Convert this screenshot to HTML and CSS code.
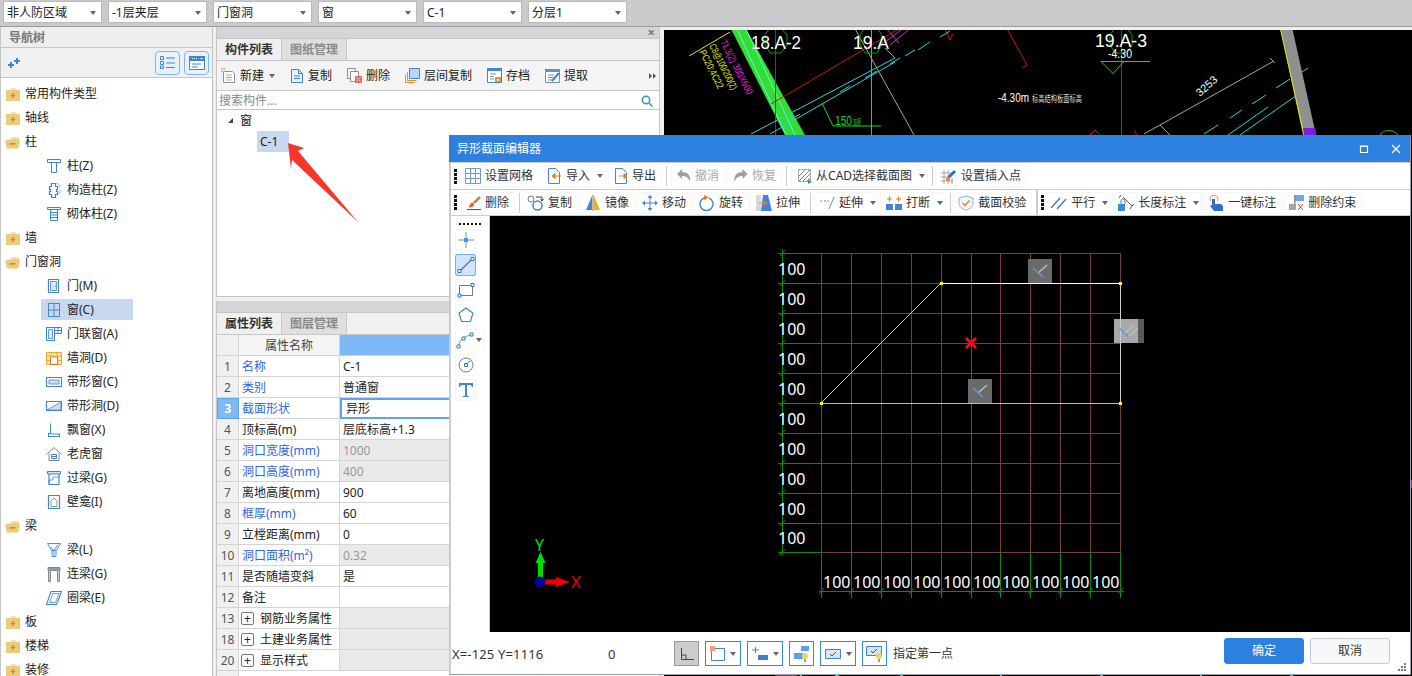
FILE: index.html
```html
<!DOCTYPE html>
<html lang="zh-CN">
<head>
<meta charset="utf-8">
<title>异形截面编辑器</title>
<link rel="stylesheet" href="styles.css">
</head>
<body>
<svg class="defs" width="0" height="0">
  <symbol id="fc" viewBox="0 0 16 16"><path d="M1 4h5V2.5h5V4h4v11H1z" fill="#eecb7c"/><path d="M6 2.500h5V4H6z" fill="#f5e0ae"/><path d="M8 7v5M5.500 9.500h5" stroke="#c9963a" stroke-width="1.600"/></symbol>
  <symbol id="fo" viewBox="0 0 17 16"><path d="M1 5h5l1-2h8v3H5z" fill="#f1d795"/><path d="M0 6h16l-2 9H2z" fill="#eecb7c"/><path d="M5 10h6" stroke="#b98a35" stroke-width="1.600"/></symbol>
</svg>
<div class="app">
  <header class="topbar">
    <div class="combo">非人防区域</div>
    <div class="combo">-1层夹层</div>
    <div class="combo">门窗洞</div>
    <div class="combo">窗</div>
    <div class="combo">C-1</div>
    <div class="combo">分层1</div>
  </header>
  <main class="workspace">
    <nav class="nav">
      <div class="nav-title">导航树</div>
      <div class="nav-tools">
        <svg class="nav-plus" width="13" height="11" viewBox="0 0 13 11"><path d="M3 5h2v2h2v2H5v2H3V9H1V7h2zM9 1h2v2h2v2h-2v2H9V5H7V3h2z" fill="#3f86d8"/></svg>
        <div class="nav-toggle"><svg width="15" height="13" viewBox="0 0 15 13"><path d="M0.500 0.500h3v3h-3zM0.500 5.500h3v3h-3zM0.500 10h3v2.500h-3z" fill="none" stroke="#3f86d8"/><path d="M6 2h9M6 7h9M6 11.500h9" stroke="#3f86d8"/></svg></div>
        <div class="nav-toggle"><svg width="16" height="14" viewBox="0 0 16 14"><rect x="0.500" y="0.500" width="15" height="13" fill="#fff" stroke="#3f86d8"/><path d="M0 0h16v5H0z" fill="#3f86d8"/><path d="M3 2h1v1H3zM5 2h1v1H5zM7 2h1v1H7zM11 2h3l-1.500 1.500z" fill="#fff"/><path d="M3 8h9M3 11h6" stroke="#3f86d8"/></svg></div>
      </div>
      <div class="tree">
        <div class="row"><svg class="fold" width="16" height="16"><use href="#fc"/></svg><span>常用构件类型</span></div>
        <div class="row"><svg class="fold" width="16" height="16"><use href="#fc"/></svg><span>轴线</span></div>
        <div class="row"><svg class="fold" width="16" height="16"><use href="#fo"/></svg><span>柱</span></div>
        <div class="row child"><svg width="16" height="16" viewBox="0 0 16 16" fill="none" stroke="#3f86d8"><path d="M1.500 1.500h13v3h-13zM5.500 4.500h5v10h-5z"/></svg><span>柱(Z)</span></div>
        <div class="row child"><svg width="16" height="16" viewBox="0 0 16 16" fill="none" stroke="#3f86d8" stroke-width="1.200"><path d="M5.500 1.500h4v3h2v3h-1v2h1v3h-2v3h-4v-3h-2v-3h1v-2h-1v-3h2z"/><path d="M10 1.500c3 0 4 2 3.500 4M12 12c2 0 2.500-2 2-4" stroke="#a9c8ec"/></svg><span>构造柱(Z)</span></div>
        <div class="row child"><svg width="16" height="16" viewBox="0 0 16 16" fill="none" stroke="#3f86d8"><path d="M1.500 1.500h13v2h-13zM4.500 3.500h7v11h-7zM4.500 6.500h7M4.500 9h7M4.500 11.500h7"/></svg><span>砌体柱(Z)</span></div>
        <div class="row"><svg class="fold" width="16" height="16"><use href="#fc"/></svg><span>墙</span></div>
        <div class="row"><svg class="fold" width="16" height="16"><use href="#fo"/></svg><span>门窗洞</span></div>
        <div class="row child"><svg width="16" height="16" viewBox="0 0 16 16" fill="none" stroke="#3f86d8"><path d="M2.500 1.500h10v13h-10z" stroke-width="1.200"/><path d="M4.500 3.500h6v9h-6z" fill="#dceafa" stroke-width=".8"/><path d="M9 8h1" stroke-width="1.200"/></svg><span>门(M)</span></div>
        <div class="row child selected"><svg width="16" height="16" viewBox="0 0 16 16" fill="none" stroke="#3f86d8"><path d="M2.500 1.500h11v13h-11zM8 1.500v13M2.500 8h11"/></svg><span>窗(C)</span></div>
        <div class="row child"><svg width="16" height="16" viewBox="0 0 16 16" fill="none" stroke="#3f86d8"><path d="M0.500 1.500h8v13h-8z" stroke-width="1.200"/><path d="M2.500 3.500h4v9h-4z" fill="#dceafa" stroke-width=".8"/><path d="M8.500 1.500h7v6h-7zM12 1.500v6M8.500 4.500h7"/></svg><span>门联窗(A)</span></div>
        <div class="row child"><svg width="16" height="16" viewBox="0 0 16 16" fill="#fde6b5" stroke="#f2a72e"><path d="M0.500 2.500h15v12h-15z"/><path d="M0.500 6h15M5 2.500V6M11 2.500V6M0.500 10.500H4M12 10.500h3.500"/><path d="M4.500 7h7v7.500h-7z" fill="#fff" stroke="#e0762a"/></svg><span>墙洞(D)</span></div>
        <div class="row child"><svg width="16" height="16" viewBox="0 0 16 16" fill="none" stroke="#3f86d8"><path d="M0.500 3.500h15v9h-15z" stroke-width="1.200"/><path d="M3 6h10v4H3z" fill="#cfe1f5" stroke-width=".8"/></svg><span>带形窗(C)</span></div>
        <div class="row child"><svg width="16" height="16" viewBox="0 0 16 16" fill="none" stroke="#3f86d8"><path d="M0.500 3.500h15v9h-15z" stroke-width="1.200"/><path d="M1 12L15 4v8z" fill="#cfe1f5" stroke-width=".8"/></svg><span>带形洞(D)</span></div>
        <div class="row child"><svg width="16" height="16" viewBox="0 0 16 16" fill="none" stroke="#3f86d8"><path d="M4.500 1.500v10h-2v3h11v-2.500h-9" stroke-width="1.100"/></svg><span>飘窗(X)</span></div>
        <div class="row child"><svg width="16" height="16" viewBox="0 0 16 16" fill="none" stroke="#7c8a99"><path d="M0.500 8.500L8 1.500l7.500 7M3 7.500v7h10v-7"/><path d="M5.500 8.500h5v4h-5zM5.500 10.500h5" stroke="#3f86d8"/></svg><span>老虎窗</span></div>
        <div class="row child"><svg width="16" height="16" viewBox="0 0 16 16" fill="none" stroke="#3f86d8"><path d="M1.500 1.500h13v2.500h-13z" fill="#cfe1f5"/><path d="M3 4v10.500h10V4" stroke-width="1.200"/><path d="M3 14l0-4h4V7h6" stroke-width=".8"/></svg><span>过梁(G)</span></div>
        <div class="row child"><svg width="16" height="16" viewBox="0 0 16 16" fill="none" stroke="#3f86d8"><path d="M2.500 1.500h11v13h-11z" stroke-width="1.200"/><path d="M5 12.500V7l3-3 3 3v5.500z" stroke="#6f8fb4" stroke-width=".9"/></svg><span>壁龛(I)</span></div>
        <div class="row"><svg class="fold" width="16" height="16"><use href="#fo"/></svg><span>梁</span></div>
        <div class="row child"><svg width="16" height="16" viewBox="0 0 16 16" fill="none" stroke="#3f86d8"><path d="M1.500 1.500h13l-4 7h-5zM6 8.500v6h4v-6M8 8.500v6M4 4.500l4 4 4-6" stroke-width=".9"/></svg><span>梁(L)</span></div>
        <div class="row child"><svg width="16" height="16" viewBox="0 0 16 16" fill="none" stroke="#7c8a99"><path d="M2 1.500h12v3H2z" fill="#8d99a6"/><path d="M2.500 4.500v11h2v-11M11.500 4.500v11h2v-11" fill="#c5ccd3"/></svg><span>连梁(G)</span></div>
        <div class="row child"><svg width="16" height="16" viewBox="0 0 16 16" fill="none" stroke="#3f86d8"><path d="M5 1.500h10.500l-5 13H0.500z" stroke-width="1.100"/><path d="M7 3.500h6l-3.500 9H3.500z" stroke-width=".8"/></svg><span>圈梁(E)</span></div>
        <div class="row"><svg class="fold" width="16" height="16"><use href="#fc"/></svg><span>板</span></div>
        <div class="row"><svg class="fold" width="16" height="16"><use href="#fc"/></svg><span>楼梯</span></div>
        <div class="row"><svg class="fold" width="16" height="16"><use href="#fc"/></svg><span>装修</span></div>
      </div>
    </nav>

    <section class="mid">
      <div class="panel-top">
        <div class="strip"><span class="strip-x">×</span></div>
        <div class="tabs"><div class="tab active">构件列表</div><div class="tab">图纸管理</div></div>
        <div class="mtools">
          <div class="mtool"><svg width="15" height="15" viewBox="0 0 15 15"><path d="M2.500 3.500h9l2 2v9h-11z" fill="#fff" stroke="#8a8f95"/><path d="M5 7h6M5 9.500h6M5 12h6" stroke="#a6abb0"/><path d="M0 0h4v4H0z" fill="#f2a04a"/><path d="M2 0v4M0 2h4" stroke="#fff" stroke-width=".8"/></svg><span>新建</span><i class="caret"></i></div>
          <div class="mtool"><svg width="14" height="15" viewBox="0 0 14 15"><path d="M1.500 1.500h7l4 4v9h-11z" fill="#e9f2fc" stroke="#3f86d8"/><path d="M8.500 1.500v4h4M4 8h6M4 10.500h6" fill="none" stroke="#3f86d8"/></svg><span>复制</span></div>
          <div class="mtool"><svg width="15" height="15" viewBox="0 0 15 15"><path d="M0.500 0.500h8v10h-8z" fill="#f6f6f6" stroke="#8a8f95"/><path d="M3.500 3.500h8v10h-8z" fill="#fff" stroke="#8a8f95"/><path d="M8 8h7v7H8z" fill="#e06a6a"/><path d="M9.500 9.500l4 4M13.500 9.500l-4 4" stroke="#fff"/></svg><span>删除</span></div>
          <div class="mtool"><svg width="15" height="15" viewBox="0 0 15 15"><path d="M4.500 0.500h10v10h-10z" fill="#bcd6f5" stroke="#3f86d8"/><path d="M2.500 4v8.500h9M0.500 6.500v8h9" fill="none" stroke="#ee8a2f"/></svg><span>层间复制</span></div>
          <div class="mtool"><svg width="15" height="15" viewBox="0 0 15 15"><path d="M0.500 0.500h14v14h-14z" fill="#fff" stroke="#3f86d8"/><path d="M0 0h15v3H0z" fill="#3f86d8"/><path d="M3 6h6M3 8.500h4M3 11h4" stroke="#8a8f95"/><path d="M8 9h6v5H8z" fill="#ee8a2f"/><path d="M10 11h2v2h-2z" fill="#fff"/></svg><span>存档</span></div>
          <div class="mtool"><svg width="15" height="15" viewBox="0 0 15 15"><path d="M0.500 1.500h14v13h-14z" fill="#fff" stroke="#6f8fb4"/><path d="M0 1h15v3H0z" fill="#6f8fb4"/><path d="M3 7h6M3 9.500h5M3 12h4" stroke="#8a8f95"/><path d="M7 13l7-8" stroke="#3f86d8" stroke-width="2"/></svg><span>提取</span></div>
          <div class="more"><i></i><i></i></div>
        </div>
        <div class="search"><span>搜索构件...</span><svg width="12" height="12" viewBox="0 0 12 12" fill="none" stroke="#3a8fcf" stroke-width="1.500"><circle cx="5" cy="5" r="3.700"/><path d="M8 8l3.500 3.500"/></svg></div>
        <div class="comp-tree">
          <div class="comp-root"><i class="tri"></i><span>窗</span></div>
          <div class="comp-item">C-1</div>
        </div>
      </div>
      <div class="panel-bottom">
        <div class="strip"></div>
        <div class="tabs"><div class="tab active">属性列表</div><div class="tab">图层管理</div></div>
        <div class="props">
          <div class="n"></div><div class="c head">属性名称</div><div class="c head-v"></div>
          <div class="n">1</div><div class="c b">名称</div><div class="c">C-1</div>
          <div class="n">2</div><div class="c b">类别</div><div class="c">普通窗</div>
          <div class="n on">3</div><div class="c b">截面形状</div><div class="c edit">异形</div>
          <div class="n">4</div><div class="c">顶标高(m)</div><div class="c">层底标高+1.3</div>
          <div class="n">5</div><div class="c b">洞口宽度(mm)</div><div class="c off">1000</div>
          <div class="n">6</div><div class="c b">洞口高度(mm)</div><div class="c off">400</div>
          <div class="n">7</div><div class="c">离地高度(mm)</div><div class="c">900</div>
          <div class="n">8</div><div class="c b">框厚(mm)</div><div class="c">60</div>
          <div class="n">9</div><div class="c">立樘距离(mm)</div><div class="c">0</div>
          <div class="n">10</div><div class="c b">洞口面积(m²)</div><div class="c off">0.32</div>
          <div class="n">11</div><div class="c">是否随墙变斜</div><div class="c">是</div>
          <div class="n">12</div><div class="c">备注</div><div class="c"></div>
          <div class="n">13</div><div class="c grp"><i class="plus">+</i>钢筋业务属性</div><div class="c off"></div>
          <div class="n">18</div><div class="c grp"><i class="plus">+</i>土建业务属性</div><div class="c off"></div>
          <div class="n">20</div><div class="c grp"><i class="plus">+</i>显示样式</div><div class="c off"></div>
          <div class="n last"></div>
        </div>
      </div>
    </section>

    <div class="cad">
      <svg class="cad-svg" width="748" height="646" viewBox="664 30 748 646" font-family="'Liberation Sans',sans-serif">
        <path d="M730 27h15l61 110h-20z" fill="#33dd33"/>
        <path d="M736 27l50 108M745 27l50 108" stroke="#5ff5e0" fill="none"/>
        <g fill="none" stroke="#cc1111">
          <path d="M775.500 27v110M1121.500 27v110"/>
          <path d="M771 104L902 27M1006 27l21 38-5 3M944 27l6 13 3-6M1090 135l5-5 5 5M1134 130l3 5"/>
        </g>
        <path d="M871.500 27v110" stroke="#c070c0"/>
        <path d="M885 27l14 16M905 27l-24 18M912 27l-22 18" stroke="#cc33cc" fill="none"/>
        <g fill="none" stroke="#1ed8e0">
          <path d="M751 134L895 58l-10-10"/>
          <path d="M770 134L895 62M790 120l10-6M840 92l10-6M865 78l12-7M890 64l10-6M905 56l10-6M918 50l12-8M940 37l10-6M968 30l3-2"/>
          <path d="M1204 134l14-9M1230 118l12-8M1252 104l14-9M1276 88l14-9M1296 76l12-8M1228 135l40-28M1240 135l60-42"/>
        </g>
        <path d="M854 27l60 108M1144 134l130-73M1160 125l10 10M1270 58l5 5" stroke="#a8b060" fill="none"/>
        <path d="M1280 27h12l24 108h-13z" fill="#909090"/>
        <path d="M1280 27l24 108" stroke="#e6e600" fill="none"/>
        <path d="M1303 128h12l1 7h-12z" fill="#7a1fe0"/>
        <g stroke="#0a9a0a" fill="none">
          <path d="M765 35l5-7h11l6 7v10l-6 8h-11l-5-8zM860 35l5-7h12l5 7v10l-5 8h-12l-5-8zM1110 35l5-7h12l5 7v10l-5 8h-12l-5-8z"/>
          <path d="M1380 135c3-6 14-6 18 0" stroke="#18c018"/>
        </g>
        <path d="M1101 61.500h49M1101 61.500l12 12 11-12M822 103l11 23h48" stroke="#19d919" fill="none"/>
        <path d="M689 56l41-24" stroke="#e6e600" fill="none"/>
        <text x="751" y="49" fill="#fff" font-size="18" textLength="50" lengthAdjust="spacingAndGlyphs">18.A-2</text>
        <text x="853" y="49" fill="#fff" font-size="18" textLength="36" lengthAdjust="spacingAndGlyphs">19.A</text>
        <text x="1095" y="47" fill="#fff" font-size="18" textLength="52" lengthAdjust="spacingAndGlyphs">19.A-3</text>
        <text x="1108" y="58" fill="#fff" font-size="12" textLength="24" lengthAdjust="spacingAndGlyphs">-4.30</text>
        <text x="998" y="102" fill="#fff" font-size="13" textLength="31" lengthAdjust="spacingAndGlyphs">-4.30m</text>
        <text x="1032" y="102" fill="#ddd" font-size="9" textLength="50" lengthAdjust="spacingAndGlyphs" font-family="'Noto Sans CJK SC',sans-serif">标高结构板面标高</text>
        <text x="835" y="125" fill="#19d919" font-size="13" textLength="17" lengthAdjust="spacingAndGlyphs">150</text>
        <text x="853" y="125" fill="#19d919" font-size="8" textLength="8" lengthAdjust="spacingAndGlyphs" font-family="'Noto Sans CJK SC',sans-serif">加密</text>
        <text transform="translate(1200 97) rotate(-42)" fill="#fff" font-size="11">3253</text>
        <text transform="translate(720 42) rotate(63)" fill="#e020e0" font-size="10" textLength="60" lengthAdjust="spacingAndGlyphs">TL3(2) 300X600</text>
        <text transform="translate(709 46) rotate(63)" fill="#e6e600" font-size="10" textLength="50" lengthAdjust="spacingAndGlyphs">C8@100/200(2)</text>
        <text transform="translate(699 52) rotate(63)" fill="#e6e600" font-size="10" textLength="42" lengthAdjust="spacingAndGlyphs">PC20;4C22</text>
        <path d="M800 675h2v2h-2zM835 675h4v2h-4zM900 675h3v2h-3zM1000 675h2v2h-2zM1100 675h3v2h-3zM1200 675h2v2h-2zM1290 675h3v2h-3z" fill="#1ed8e0"/>
        <path d="M775 674h22v3h-22zM1411 480h1v8h-1z" fill="#7a1fe0"/>
      </svg>
    </div>
  </main>

  <svg class="callout" width="80" height="90" viewBox="285 140 80 90"><path d="M288 143l16 5-6 3 60 71-66-62-1 9z" fill="#f5382a"/></svg>

  <section class="dialog">
    <div class="dlg-title">
      <span>异形截面编辑器</span>
      <svg class="win" width="10" height="10" viewBox="0 0 10 10" fill="none" stroke="#fff"><path d="M1.500 2.500h7v6h-7zM1 2h8" stroke-width="1.200"/></svg>
      <svg class="win win-x" width="10" height="10" viewBox="0 0 10 10" stroke="#fff" stroke-width="1.300"><path d="M1 1l8 8M9 1l-8 8"/></svg>
    </div>
    <div class="dlg-tb first">
      <i class="grip"></i>
      <div class="tool"><svg width="16" height="16" viewBox="0 0 16 16" fill="none" stroke="#6f9ccf"><path d="M0.500 0.500h15v15h-15zM5.500 0.500v15M10.500 0.500v15M0.500 5.500h15M0.500 10.500h15"/></svg><span>设置网格</span></div>
      <div class="tool drop"><svg width="15" height="16" viewBox="0 0 15 16"><path d="M1.500 0.500h7l4 4v11h-11z" fill="#fff" stroke="#3f86d8"/><path d="M14 8H8M8 5.500L5 8l3 2.500z" fill="#ee7a1f" stroke="#ee7a1f"/></svg><span>导入</span><i class="caret"></i></div>
      <div class="tool"><svg width="14" height="16" viewBox="0 0 14 16"><path d="M1.500 0.500h7l4 4v11h-11z" fill="#fff" stroke="#3f86d8"/><path d="M5 8h5M10 5.500L13 8l-3 2.500z" fill="#ee7a1f" stroke="#ee7a1f"/></svg><span>导出</span></div>
      <i class="sep"></i>
      <div class="tool dim"><svg width="14" height="14" viewBox="0 0 14 14"><path d="M0 5l5-5v3c6 0 9 4 8 10-1-4-4-6-8-6v3z" fill="#9aa0a6"/></svg><span>撤消</span></div>
      <div class="tool dim"><svg width="15" height="14" viewBox="0 0 14 14"><path d="M14 5L9 0v3C3 3 0 7 1 13c1-4 4-6 8-6v3z" fill="#9aa0a6"/></svg><span>恢复</span></div>
      <i class="sep"></i>
      <div class="tool drop"><svg width="15" height="16" viewBox="0 0 15 16" fill="none" stroke="#7c8288"><path d="M1.500 1.500h12v12h-12z" stroke-dasharray="2 1"/><path d="M2 8l6-6M2 13l11-11M6 13l7-7M10 13l3-3"/><path d="M11 11l4 3-4 2z" fill="#3f86d8" stroke="none"/></svg><span>从CAD选择截面图</span><i class="caret"></i></div>
      <i class="sep tight"></i>
      <div class="tool"><svg width="16" height="16" viewBox="0 0 16 16" fill="none" stroke="#8a8f95" stroke-width=".8"><path d="M0 5h10M0 9h10M0 13h12M3 2v14M7 2v14M11 10v6"/><circle cx="7" cy="11" r="2" fill="#ee7a1f" stroke="none"/><path d="M8 9l6-6" stroke="#2f6fc8" stroke-width="3"/></svg><span>设置插入点</span></div>
    </div>
    <div class="dlg-tb second">
      <i class="grip g2"></i>
      <div class="tool"><svg width="14" height="16" viewBox="0 0 16 16" overflow="visible"><path d="M8 8l7-7" stroke="#b48a4a" stroke-width="3"/><path d="M3 10c2-3 4-3 5-1s-2 4-6 4z" fill="#d9692a"/><path d="M0 15.500h16" stroke="#333"/></svg><span>删除</span></div>
      <i class="sep"></i>
      <div class="tool"><svg width="17" height="16" viewBox="0 0 17 16" fill="none"><circle cx="4" cy="4" r="3" stroke="#777"/><circle cx="10.500" cy="10.500" r="4.500" stroke="#3f86d8" stroke-width="1.500"/><path d="M9 2h6v3M13.500 4l1.500 2 1.500-2" stroke="#444"/></svg><span>复制</span></div>
      <div class="tool"><svg width="16" height="16" viewBox="0 0 16 16"><path d="M7 1L1 15h6z" fill="#3f86d8"/><path d="M9 1l6 14H9z" fill="#f2b01e"/><path d="M8 0v16" stroke="#777"/></svg><span>镜像</span></div>
      <div class="tool"><svg width="16" height="16" viewBox="0 0 16 16" fill="#3f86d8" stroke="#3f86d8"><path d="M8 3v10M3 8h10" fill="none"/><path d="M8 0l2.500 3h-5zM8 16l2.500-3h-5zM0 8l3-2.500v5zM16 8l-3-2.500v5z" stroke="none"/></svg><span>移动</span></div>
      <div class="tool"><svg width="16" height="16" viewBox="0 0 16 16" fill="none"><path d="M5 3a6.500 6.500 0 1 0 5 0" stroke="#3f86d8" stroke-width="1.400"/><path d="M5 0l5 2.500L5 5z" fill="#ee7a1f"/></svg><span>旋转</span></div>
      <div class="tool"><svg width="16" height="16" viewBox="0 0 16 16"><path d="M0 0h5v16H0z" fill="#d5d8dc"/><path d="M7 0h5l4 16H5z" fill="#3f86d8"/><path d="M3 8h7M8 6l3 2-3 2z" stroke="#ee7a1f" fill="#ee7a1f"/></svg><span>拉伸</span></div>
      <i class="sep wide"></i>
      <div class="tool drop"><svg width="15" height="16" viewBox="0 0 15 16" fill="none" stroke="#8a8f95"><path d="M0 6h2M4 6h2M7 6h2" stroke="#5f8fc8"/><path d="M14 2L9 14" stroke="#5f8fc8"/></svg><span>延伸</span><i class="caret"></i></div>
      <div class="tool drop"><svg width="16" height="16" viewBox="0 0 16 16"><path d="M0 9h7v6H0zM9 9h7v6H9z" fill="#3f86d8"/><path d="M1 4h5M3.500 1.500v5M10 4h5M12.500 1.500v5" stroke="#ee7a1f" stroke-width="1.200"/></svg><span>打断</span><i class="caret"></i></div>
      <i class="sep"></i>
      <div class="tool"><svg width="16" height="16" viewBox="0 0 16 16" fill="none"><path d="M8 1l7 2v5c0 4-3 6-7 7-4-1-7-3-7-7V3z" fill="#eef5fc" stroke="#8ab4e4"/><path d="M4.500 8l2.500 2.500 4.500-5" stroke="#ee7a1f" stroke-width="1.300"/></svg><span>截面校验</span></div>
      <i class="bar"></i>
      <i class="grip g3"></i>
      <div class="tool drop"><svg width="16" height="16" viewBox="0 0 16 16" stroke="#3f6fb0" stroke-width="1.200"><path d="M0 13L9 3M6 14L15 4"/></svg><span>平行</span><i class="caret"></i></div>
      <div class="tool drop"><svg width="16" height="16" viewBox="0 0 16 16" fill="none"><path d="M4 9V6a2 2 0 0 1 4 0v3" stroke="#3f86d8" transform="translate(-1 0)"/><path d="M0 9h7v7H0z" fill="#3f86d8"/><path d="M3 0l-2 3M5 2l9 9M14 11l2-2M12 14l2-3" stroke="#555"/></svg><span>长度标注</span><i class="caret"></i></div>
      <div class="tool"><svg width="15" height="16" viewBox="0 0 15 16" fill="none"><path d="M1.500 6a4 4 0 1 1 7 0" stroke="#ee8a5f"/><path d="M3 4h3v5h6l2 2v5H5L1 11l2-1z" fill="#2f6fc8"/></svg><span>一键标注</span></div>
      <div class="tool"><svg width="15" height="16" viewBox="0 0 15 16"><path d="M6 0h9v6H6z" fill="#6fa8ea"/><path d="M5 0h1.500v10H5z" fill="#8a8f95"/><path d="M0 9h7v6H0z" fill="#a0a5aa"/><path d="M9 9l5 6M14 9l-5 6" stroke="#e0401f"/></svg><span>删除约束</span></div>
    </div>
    <div class="dlg-body">
      <aside class="side">
        <div class="dots"></div>
        <div class="sbtn"><svg width="16" height="16" viewBox="0 0 16 16"><path d="M8 0v5M8 11v5M0 8h5M11 8h5" stroke="#8a8f95"/><circle cx="8" cy="8" r="2.500" fill="#4a90e2"/></svg></div>
        <div class="sbtn sel"><svg width="18" height="18" viewBox="0 0 18 18" fill="none"><path d="M3 15L15 3" stroke="#6b7075" stroke-width="1.200"/><path d="M1 13.500h3v3H1zM14 1.500h3v3h-3z" fill="#fff" stroke="#2f78d0"/></svg></div>
        <div class="sbtn"><svg width="18" height="16" viewBox="0 0 18 16" fill="none"><path d="M2.500 3.500h13v10h-13z" stroke="#777"/><path d="M1 12h3v3H1zM14 1.500h3v3h-3z" fill="#fff" stroke="#2f78d0"/></svg></div>
        <div class="sbtn"><svg width="16" height="16" viewBox="0 0 16 16" fill="none"><path d="M8 1l7 5.200-2.600 8.300H3.600L1 6.200z" stroke="#3f86d8" stroke-width="1.200"/></svg></div>
        <div class="sbtn arc"><svg width="18" height="18" viewBox="0 0 18 18" fill="none"><path d="M3 15c0-5 3-9 12-11" stroke="#8a8f95"/><path d="M1 14h3v3H1zM6 6h3v3H6zM14 2h3v3h-3z" fill="#fff" stroke="#2f78d0"/></svg><i class="caret"></i></div>
        <div class="sbtn"><svg width="16" height="16" viewBox="0 0 16 16" fill="none"><circle cx="8" cy="8" r="7" stroke="#777"/><path d="M8 8l4-4" stroke="#3f86d8"/><path d="M6.500 6.500h3v3h-3z" fill="#fff" stroke="#2f78d0"/></svg></div>
        <div class="sbtn"><svg width="16" height="16" viewBox="0 0 16 16" fill="#3f86d8"><path d="M1 1h14v4h-1c0-1-1-2-2-2H9v10c0 1 1 1 2 1v1H5v-1c1 0 2 0 2-1V3H4C3 3 2 4 2 5H1z"/></svg></div>
      </aside>
      <div class="canvas">
        <svg class="canvas-svg" width="920" height="416" viewBox="490 216 920 416" font-family="'Noto Sans',sans-serif" font-size="16" fill="#fff">
          <g fill="none" stroke="#7a3d45">
            <path d="M851.500 253v299M881.500 253v299M911.500 253v299M941.500 253v299M971.500 253v299M1000.500 253v299M1030.500 253v299M1060.500 253v299M1090.500 253v299M1120.500 253v299M821.500 253v299"/>
            <path d="M821 253.500h300M821 283.500h300M821 313.500h300M821 343.500h300M821 373.500h300M821 403.500h300M821 433.500h300M821 463.500h300M821 493.500h300M821 523.500h300M821 552.500h300"/>
          </g>
          <g fill="none" stroke="#0a8a0a">
            <path d="M782.500 249v306M778 253.500h43M778 283.500h43M778 313.500h43M778 343.500h43M778 373.500h43M778 403.500h43M778 433.500h43M778 463.500h43M778 493.500h43M778 523.500h43M778 552.500h43"/>
            <path d="M819 591.500h305M821.500 552v46M851.500 552v46M881.500 552v46M911.500 552v46M941.500 552v46M971.500 552v46M1000.500 552v46M1030.500 552v46M1060.500 552v46M1090.500 552v46M1120.500 552v46"/>
            <path d="M780 256l5-6M780 286l5-6M780 316l5-6M780 346l5-6M780 376l5-6M780 406l5-6M780 436l5-6M780 466l5-6M780 496l5-6M780 526l5-6M780 555l5-6"/>
            <path d="M819 594l5-6M849 594l5-6M879 594l5-6M909 594l5-6M939 594l5-6M969 594l5-6M998 594l5-6M1028 594l5-6M1058 594l5-6M1088 594l5-6M1118 594l5-6"/>
          </g>
          <g>
            <text x="778" y="275">100</text><text x="778" y="305">100</text><text x="778" y="335">100</text><text x="778" y="365">100</text><text x="778" y="395">100</text><text x="778" y="425">100</text><text x="778" y="455">100</text><text x="778" y="485">100</text><text x="778" y="515">100</text><text x="778" y="544">100</text>
            <text x="823" y="588">100</text><text x="853" y="588">100</text><text x="883" y="588">100</text><text x="913" y="588">100</text><text x="943" y="588">100</text><text x="973" y="588">100</text><text x="1002" y="588">100</text><text x="1032" y="588">100</text><text x="1062" y="588">100</text><text x="1092" y="588">100</text>
          </g>
          <path d="M1028 259h24v24h-24zM968 379h24v24h-24z" fill="#6a6a6a"/>
          <path d="M1114 319h24v24h-24z" fill="#a8a8a8"/>
          <path d="M1138 319h6v24h-6z" fill="#5a5a5a"/>
          <path d="M941 283.500h179" stroke="#fff" fill="none"/>
          <path d="M821 403.500h299" stroke="#bbb" fill="none"/>
          <path d="M1120.500 283v120" stroke="#ccc" fill="none"/>
          <path d="M821 403L941 283" stroke="#c4c4c4" fill="none"/>
          <path d="M1038 273l9-8M978 393l9-8M1124 334l10-9M1128 337l10-9" stroke="#c0c0c0" stroke-width="1.300" fill="none"/>
          <path d="M1033 268l10 9M973 388l10 9M1119 328l10 9" stroke="#5b9be0" stroke-width="1.500" fill="none"/>
          <path d="M820 402h3v3h-3zM940 282h3v3h-3zM1119 282h3v3h-3zM1119 402h3v3h-3z" fill="#ffff00"/>
          <path d="M966 338l10 10M976 338l-10 10" stroke="#f01010" stroke-width="3"/>
          <path d="M538 582v-20h5v20z" fill="#00e000"/>
          <path d="M540.500 552l5 11h-10z" fill="#00e000"/>
          <path d="M540 579.500h16v5h-16z" fill="#ee0000"/>
          <path d="M570 582l-14-5v10z" fill="#ee0000"/>
          <circle cx="540" cy="582" r="5.500" fill="#00009a"/>
          <text x="535" y="551" fill="#00e000" font-size="16">Y</text>
          <text x="571" y="588" fill="#ee0000" font-size="17">X</text>
        </svg>
      </div>
    </div>
    <footer class="dlg-foot">
      <span class="coord">X=-125 Y=1116</span>
      <span class="zero">0</span>
      <div class="fbtn on"><svg width="14" height="12" viewBox="0 0 14 12" fill="none" stroke="#444"><path d="M1.500 0v11.500H14M1.500 7H6v4.500"/></svg></div>
      <div class="fbtn wide"><svg width="15" height="15" viewBox="0 0 15 15" fill="none"><path d="M1.500 2.500h13v12h-13z" stroke="#3f86d8"/><path d="M0 0h5v5H0z" fill="#f0a070"/></svg><i class="caret"></i></div>
      <div class="fbtn wide"><svg width="16" height="13" viewBox="0 0 16 13"><path d="M3.500 0v6M0 3h7" stroke="#3f86d8"/><path d="M6 8h10v5H6z" fill="#3f7fc8"/></svg><i class="caret"></i></div>
      <div class="fbtn"><svg width="16" height="16" viewBox="0 0 16 16"><path d="M7 0h8v5H7z" fill="#5f9fe8"/><path d="M0 7h9v6H0z" fill="#5f9fe8"/><circle cx="11" cy="10" r="3" fill="#f5d05a"/><path d="M10 13h2v3h-2z" fill="#999"/></svg></div>
      <div class="fbtn wide"><svg width="16" height="10" viewBox="0 0 16 10" fill="none"><path d="M0.500 0.500h15v9h-15z" fill="#d5e4f6" stroke="#3f86d8"/><path d="M5 5l2 2 4-4" stroke="#555"/></svg><i class="caret"></i></div>
      <div class="fbtn"><svg width="17" height="16" viewBox="0 0 17 16" fill="none"><path d="M0.500 0.500h15v9h-15z" fill="#d5e4f6" stroke="#3f86d8"/><path d="M5 5l2 2 4-4" stroke="#555"/><circle cx="13" cy="10" r="3" fill="#f5d05a"/><path d="M12 13h2v3h-2z" fill="#999"/></svg></div>
      <span class="hint">指定第一点</span>
      <button class="btn primary">确定</button>
      <button class="btn">取消</button>
      <svg class="resize" width="8" height="8" viewBox="0 0 8 8" fill="#777"><path d="M6 0h2v2H6zM3 3h2v2H3zM6 3h2v2H6zM0 6h2v2H0zM3 6h2v2H3zM6 6h2v2H6z"/></svg>
    </footer>
  </section>
</div>
</body>
</html>
```
FILE: styles.css
```css
* { box-sizing: border-box; }
html, body { margin: 0; height: 100%; }
body {
  font: 12px/16px "Noto Sans", "Noto Sans CJK SC", sans-serif;
  color: #222;
  background: #efefef;
  overflow: hidden;
}
i { font-style: normal; display: block; }
svg { display: block; flex: none; }
.defs { position: absolute; }
.app { position: relative; width: 1412px; height: 676px; overflow: hidden; }

.caret {
  width: 0; height: 0; flex: none;
  border-top: 4px solid #666;
  border-left: 3px solid transparent;
  border-right: 3px solid transparent;
}

/* top bar */
.topbar {
  height: 27px;
  display: flex;
  gap: 6px;
  padding: 1px 0 0 3px;
  background: #c9cacc;
  border-bottom: 1px solid #9b9b9b;
}
.combo {
  position: relative;
  width: 99px; height: 22px;
  padding-left: 3px;
  line-height: 22px;
  background: #fff;
  border: 1px solid #bbb;
}
.combo::after {
  content: ""; position: absolute; right: 5px; top: 9px;
  border-top: 4px solid #666;
  border-left: 3px solid transparent;
  border-right: 3px solid transparent;
}

/* workspace */
.workspace { display: flex; height: 649px; }

/* navigation tree */
.nav {
  width: 213px; flex: none;
  display: flex; flex-direction: column;
  background: #fff;
  border-left: 1px solid #c4c4c4;
  border-right: 1px solid #c4c4c4;
  overflow: hidden;
}
.nav-title {
  height: 21px; flex: none;
  padding-left: 8px;
  line-height: 21px;
  color: #777; font-weight: 700;
  background: #eee;
  border-bottom: 1px solid #c6c6c6;
}
.nav-tools {
  height: 30px; flex: none;
  display: flex; align-items: center; gap: 4px;
  padding: 0 3px 0 6px;
  background: #f0f0f0;
  border-bottom: 1px solid #c6c6c6;
}
.nav-plus { margin-right: auto; }
.nav-toggle {
  width: 25px; height: 24px;
  display: flex; align-items: center; justify-content: center;
  background: #e7f2fd;
  border: 1px solid #7db6f0;
  border-radius: 4px;
}
.tree { padding-top: 5px; }
.row {
  height: 21px; margin-bottom: 3px;
  display: flex; align-items: center; gap: 4px;
  padding-left: 4px;
  white-space: nowrap;
}
.row.child { width: 92px; margin-left: 40px; padding-left: 5px; gap: 5px; }
.row.selected { background: #c7d8f0; }

/* middle column */
.mid {
  width: 444px; flex: none;
  margin-left: 3px;
  display: flex; flex-direction: column;
}
.panel-top {
  height: 270px; flex: none;
  display: flex; flex-direction: column;
  border: solid #c6c6c6; border-width: 0 1px 1px;
  background: #fff;
}
.panel-bottom {
  flex: 1; margin-top: 4px; min-height: 0;
  display: flex; flex-direction: column;
  border: solid #c6c6c6; border-width: 0 1px;
  background: #fff;
}
.strip {
  height: 12px; flex: none;
  display: flex; justify-content: flex-end; align-items: center;
  padding-right: 4px;
  background: #d3d5d9;
  border-bottom: 1px solid #c6c6c6;
}
.strip-x { font-size: 13px; line-height: 11px; color: #777; font-weight: 700; }
.tabs {
  height: 22px; flex: none;
  display: flex;
  background: #f0f0f0;
  border-bottom: 1px solid #c6c6c6;
}
.tab {
  width: 65px;
  text-align: center;
  line-height: 22px;
  color: #8a8a8a; font-weight: 700;
  background: #dfdfdf;
  border-right: 1px solid #c6c6c6;
}
.tab.active { width: 65px; color: #333; background: #f0f0f0; border-right-color: #c6c6c6; }
.mtools {
  height: 30px; flex: none;
  display: flex; align-items: center; gap: 15px;
  padding-left: 4px;
  background: #f4f4f4;
  border-bottom: 1px solid #c6c6c6;
}
.mtool { display: flex; align-items: center; gap: 4px; }
.mtool .caret { margin-left: 1px; }
.more { margin-left: auto; margin-right: 2px; display: flex; }
.more i {
  border-left: 3px solid #555;
  border-top: 3px solid transparent;
  border-bottom: 3px solid transparent;
  margin-right: 1px;
}
.search {
  height: 19px; flex: none;
  display: flex; align-items: center; justify-content: space-between;
  padding: 1px 6px 0 2px;
  color: #888;
  background: #fff;
  border-bottom: 1px solid #c6c6c6;
}
.comp-tree { flex: 1; background: #fff; position: relative; }
.comp-root {
  display: flex; align-items: center; gap: 7px;
  height: 21px; padding-left: 11px;
  color: #111;
}
.tri {
  width: 0; height: 0;
  border-bottom: 5px solid #444;
  border-left: 5px solid transparent;
}
.comp-item {
  width: 32px; height: 21px;
  margin: 0 0 0 40px;
  padding-left: 3px;
  line-height: 22px;
  background: #c7d8f0;
}

/* property grid */
.props {
  flex: 1;
  display: grid;
  grid-template-columns: 22px 101px 1fr;
  grid-auto-rows: 21px;
  overflow: hidden;
}
.n {
  text-align: center; line-height: 21px;
  color: #555;
  background: #f0f0f0;
  border-right: 1px solid #d4d4d4;
  border-bottom: 1px solid #d4d4d4;
}
.n.on { background: #7eb8f6; color: #fff; font-weight: 700; border: 1px solid #5fa3ee; line-height: 20px; }
.n.last { border-bottom: 0; }
.c {
  padding-left: 3px;
  line-height: 21px;
  white-space: nowrap;
  border-right: 1px solid #d4d4d4;
  border-bottom: 1px solid #d4d4d4;
}
.head { background: #f4f4f4; text-align: center; padding-left: 0; color: #444; }
.head-v { background: #7eb8f6; border-right: 0; }
.c.b { color: #2f66e6; }
.c.off { background: #e9e9e9; color: #999; }
.c.edit { border: 2px solid #5fa3ee; border-width: 2px 0 2px 2px; padding-left: 4px; line-height: 18px; }
.grp { display: flex; align-items: center; gap: 6px; padding: 1px 0 0 2px; }
.plus {
  width: 13px; height: 13px;
  display: flex; align-items: center; justify-content: center;
  font-size: 12px; line-height: 11px;
  border: 1px solid #777; border-radius: 2px;
}

/* CAD drawing */
.cad { flex: 1; margin: 3px 0 0 4px; background: #000; overflow: hidden; }
.callout { position: absolute; left: 285px; top: 140px; }

/* section editor window */
.dialog {
  position: absolute; left: 449px; top: 135px;
  width: 962px; height: 540px;
  display: flex; flex-direction: column;
  background: #c9cdd2;
  border-right: 1px solid #9aa0a8;
  border-bottom: 1px solid #9aa0a8;
}
.dlg-title {
  height: 27px; flex: none;
  display: flex; align-items: center;
  padding-left: 8px;
  color: #fff;
  background: #2e80e0;
}
.win { margin-left: auto; margin-right: 22px; }
.win.win-x { margin-left: 0; margin-right: 9px; }
.dlg-tb {
  flex: none;
  display: flex; align-items: center;
  margin-left: 2px;
  padding-left: 3px;
  background: #fff;
  color: #333;
}
.dlg-tb.first { height: 26px; gap: 2px; margin-top: 1px; }
.dlg-tb.second { height: 25px; gap: 1px; margin-top: 1px; }
.grip {
  width: 3px; height: 15px; flex: none;
  background: repeating-linear-gradient(#111 0 3px, transparent 3px 4px);
}
.grip.g2 { margin-right: 3px; }
.grip.g3 { margin: 0 0 0 2px; }
.tool {
  height: 22px; flex: none;
  display: flex; align-items: center; gap: 4px;
  padding: 0 6px;
  border-radius: 3px;
  box-shadow: inset 0 0 0 1px #f7f7f7;
}
.tool.drop { padding-right: 3px; }
.tool .caret { margin-left: 3px; }
.tool.dim { color: #a4a8ad; }
.sep { width: 1px; height: 20px; flex: none; margin: 0 2px; background: #c9cdd2; }
.sep.tight { margin-right: 0; }
.second .sep { margin: 0 0 0 3px; }
.second .sep.wide { margin: 0 2px 0 3px; }
.bar { width: 2px; height: 25px; flex: none; margin-left: 3px; background: #c9cdd2; }

.dlg-body { height: 416px; flex: none; margin-top: 1px; display: flex; margin-left: 2px; }
.side {
  width: 39px; flex: none;
  padding: 7px 0 0 4px;
  background: #fff;
  border-right: 1px solid #c9cdd2;
}
.dots {
  width: 22px; height: 2px; margin: 0 0 4px 4px;
  background: repeating-linear-gradient(90deg, #111 0 2px, transparent 2px 4px);
}
.sbtn {
  width: 21px; height: 22px; margin-bottom: 3px;
  display: flex; align-items: center; justify-content: center;
  border-radius: 3px;
  box-shadow: inset 0 0 0 1px #f5f5f5;
}
.sbtn.sel { background: #cfe4fb; box-shadow: inset 0 0 0 1px #6fb0f0; }
.sbtn.arc { width: 29px; justify-content: flex-start; padding-left: 1px; gap: 2px; }
.canvas { flex: 1; background: #000; overflow: hidden; }

.dlg-foot {
  position: relative;
  flex: 1; margin-left: 2px;
  display: flex; align-items: center; gap: 6px;
  padding: 1px 20px 0 1px;
  background: #fff;
  color: #333;
}
.coord { width: 150px; flex: none; font-size: 13px; letter-spacing: .15px; }
.zero { width: 60px; flex: none; font-size: 13px; }
.fbtn {
  width: 25px; height: 25px; flex: none;
  display: flex; align-items: center; justify-content: center;
  background: #fff;
  border: 1px solid #2e8ae8;
}
.fbtn.wide { width: 36px; justify-content: flex-start; padding-left: 4px; gap: 5px; }
.fbtn.on { background: #cdcdcd; border-color: #999; }
.hint { margin-right: auto; }
.btn {
  width: 80px; height: 26px;
  margin: -5px 0 0;
  font: inherit;
  color: #333;
  background: #f8f8fa;
  border: 1px solid #c3c9dc;
  border-radius: 3px;
}
.btn.primary { color: #fff; background: #2e80e0; border-color: #2e80e0; }
.resize { position: absolute; right: 4px; bottom: 3px; }
```
